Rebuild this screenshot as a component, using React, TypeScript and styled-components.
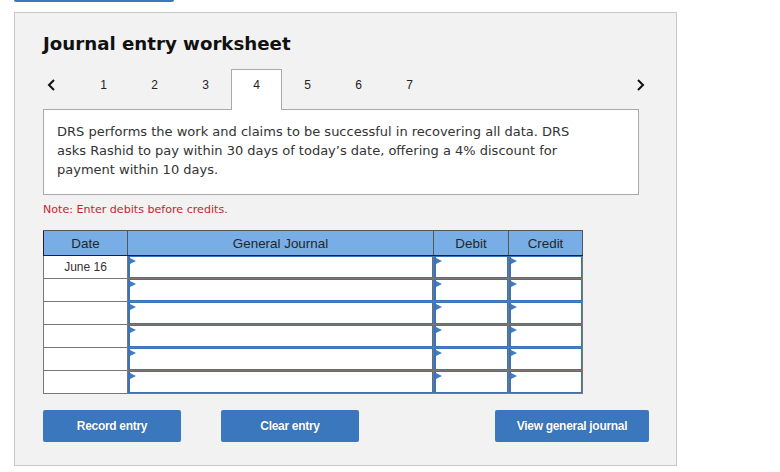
import React from 'react'
import styled, { createGlobalStyle } from 'styled-components'

const GlobalStyle = createGlobalStyle`
  body {
    margin: 0;
    background: #ffffff;
    font-family: "DejaVu Sans", Verdana, sans-serif;
  }
`

const Page = styled.div`
  padding: 0 0 0 14px;
  width: 780px;
  height: 472px;
  box-sizing: border-box;
`

const TopTab = styled.div`
  width: 160px;
  height: 2px;
  background: #3a77bc;
  border-radius: 0 0 3px 3px;
  margin-bottom: 10px;
`

const Panel = styled.div`
  width: 663px;
  height: 454px;
  box-sizing: border-box;
  background: #f2f2f2;
  border: 1px solid #c8c8c8;
  padding: 20px 28px 0 28px;
  display: flex;
  flex-direction: column;
`

const Title = styled.h1`
  margin: 0;
  font-family: "DejaVu Sans", Verdana, sans-serif;
  font-weight: bold;
  font-size: 18.2px;
  line-height: 22px;
  color: #111;
`

const NavRow = styled.div`
  display: flex;
  align-items: flex-start;
  margin-top: 14px;
`

const TabStrip = styled.div`
  width: 596px;
  height: 41px;
  box-sizing: border-box;
  display: flex;
  align-items: flex-start;
  border-bottom: 1px solid #aaaaaa;
`

const Arrow = styled.div<{ $side: 'left' | 'right' }>`
  width: ${(p) => (p.$side === 'left' ? '35px' : '10px')};
  margin-left: ${(p) => (p.$side === 'left' ? '0' : '-2px')};
  padding: ${(p) => (p.$side === 'left' ? '10px 0 0 4px' : '10px 0 0 0')};
  box-sizing: border-box;
  display: flex;
`

const Tab = styled.div<{ $active?: boolean }>`
  width: 51px;
  height: ${(p) => (p.$active ? '41px' : '40px')};
  box-sizing: border-box;
  text-align: center;
  padding-top: ${(p) => (p.$active ? '8px' : '9px')};
  font-family: "Liberation Sans", Arial, sans-serif;
  font-size: 12px;
  line-height: 14px;
  color: #222;
  background: ${(p) => (p.$active ? '#ffffff' : 'transparent')};
  border: ${(p) => (p.$active ? '1px solid #aaaaaa' : 'none')};
  border-bottom: none;
  position: relative;
  z-index: 1;
`

const Description = styled.div`
  width: 596px;
  box-sizing: border-box;
  height: 85px;
  background: #ffffff;
  border: 1px solid #aaaaaa;
  border-top: none;
  padding: 12px 40px 0 13px;
  font-size: 13px;
  line-height: 19px;
  color: #333;
`

const Note = styled.div`
  margin-top: 8px;
  font-size: 11.1px;
  line-height: 14px;
  color: #c1272d;
`

const JournalTable = styled.table`
  margin-top: 13px;
  border-collapse: collapse;
  table-layout: fixed;
  width: 540px;
  font-family: "Liberation Sans", Arial, sans-serif;
  border: 1px solid #777777;
`

const HeadCell = styled.th<{ $w?: number }>`
  ${(p) => (p.$w ? `width: ${p.$w}px;` : '')}
  height: 24px;
  padding: 0;
  background: #78ade5;
  border: 1px solid #555555;
  border-bottom: 1px solid #222222;
  border-left-color: #222222;
  font-size: 13.4px;
  font-weight: normal;
  color: #262626;
  text-align: center;
`

const DateCell = styled.td`
  height: 22px;
  padding: 0;
  background: #ffffff;
  border: 1px solid #777777;
  font-size: 12px;
  color: #333;
  text-align: center;
`

const InputCell = styled.td`
  height: 22px;
  padding: 0;
  border: 1px solid #777777;
  background: #ffffff;
`

const InputBox = styled.div`
  height: 22px;
  box-sizing: border-box;
  border: 1px solid #3b72b8;
  border-left-width: 2px;
  background: #ffffff;
  position: relative;
`

const Flag = styled.span`
  position: absolute;
  left: 0;
  top: 1px;
  width: 0;
  height: 0;
  border-top: 3.5px solid transparent;
  border-bottom: 3.5px solid transparent;
  border-left: 6px solid #3e7cc4;
`

const ButtonRow = styled.div`
  margin-top: 16px;
  width: 606px;
  display: flex;
  gap: 40px;
`

const Button = styled.button`
  width: 138px;
  height: 32px;
  border: none;
  border-radius: 2px;
  background: #3a77bc;
  color: #ffffff;
  font-family: "Liberation Sans", Arial, sans-serif;
  font-weight: bold;
  font-size: 12px;
  letter-spacing: -0.3px;
  text-shadow: 0 0 1px rgba(0, 0, 0, 0.3);
  padding: 0;
  &:last-child {
    margin-left: auto;
    width: 154px;
  }
`

function Chevron({ dir }: { dir: 'left' | 'right' }) {
  const d = dir === 'left' ? 'M7 1 L2 6 L7 11' : 'M1 1 L6 6 L1 11'
  return (
    <svg width="9" height="12" viewBox="0 0 9 12">
      <path d={d} fill="none" stroke="#111" strokeWidth="2" />
    </svg>
  )
}

const rows = ['June 16', '', '', '', '', '']

export default function App() {
  return (
    <Page>
      <GlobalStyle />
      <TopTab />
      <Panel>
        <Title>Journal entry worksheet</Title>
        <NavRow>
          <TabStrip>
            <Arrow $side="left">
              <Chevron dir="left" />
            </Arrow>
            {[1, 2, 3, 4, 5, 6, 7].map((n) => (
              <Tab key={n} $active={n === 4}>
                {n}
              </Tab>
            ))}
          </TabStrip>
          <Arrow $side="right">
            <Chevron dir="right" />
          </Arrow>
        </NavRow>
        <Description>
          DRS performs the work and claims to be successful in recovering all data. DRS asks
          Rashid to pay within 30 days of today’s date, offering a 4% discount for payment
          within 10 days.
        </Description>
        <Note>Note: Enter debits before credits.</Note>
        <JournalTable>
          <thead>
            <tr>
              <HeadCell $w={83}>Date</HeadCell>
              <HeadCell $w={305}>General Journal</HeadCell>
              <HeadCell $w={74}>Debit</HeadCell>
              <HeadCell>Credit</HeadCell>
            </tr>
          </thead>
          <tbody>
            {rows.map((date, i) => (
              <tr key={i}>
                <DateCell>{date}</DateCell>
                {[0, 1, 2].map((c) => (
                  <InputCell key={c}>
                    <InputBox>
                      <Flag />
                    </InputBox>
                  </InputCell>
                ))}
              </tr>
            ))}
          </tbody>
        </JournalTable>
        <ButtonRow>
          <Button>Record entry</Button>
          <Button>Clear entry</Button>
          <Button>View general journal</Button>
        </ButtonRow>
      </Panel>
    </Page>
  )
}
